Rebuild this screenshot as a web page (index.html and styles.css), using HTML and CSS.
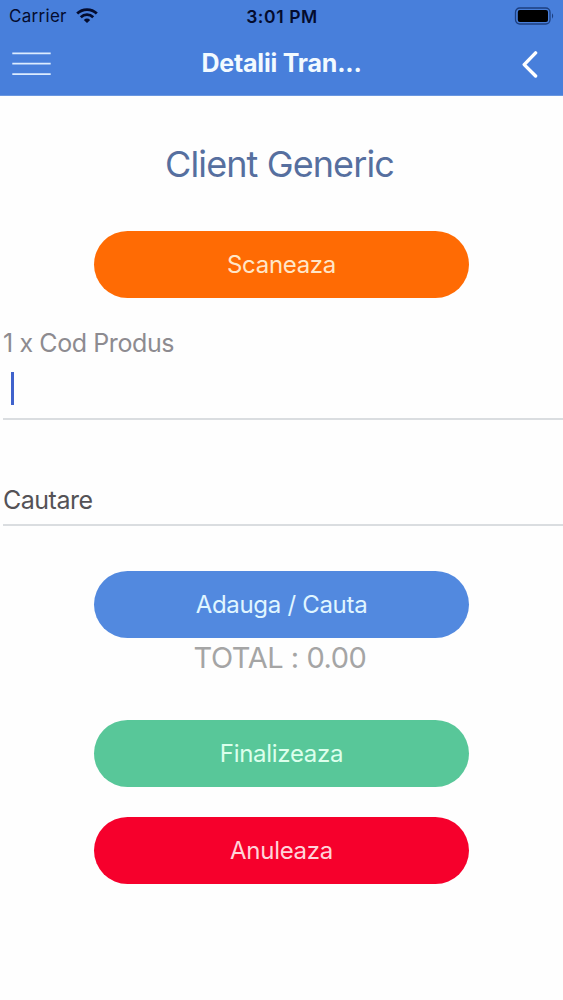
FILE: index.html
```
<!DOCTYPE html>
<html lang="ro">
<head>
    <meta charset="UTF-8">
    <meta name="viewport" content="width=device-width, initial-scale=1.0">
    <link rel="stylesheet" href="styles.css">
    <title>Detalii Tranzactie</title>
</head>
<body>
    <header class="header">
        <div class="status">
            <div class="carrier">
                <span>Carrier</span>
                <svg class="wifi" width="22" height="16" viewBox="0 0 22 16">
                    <g fill="none" stroke="#040c2e" stroke-width="2.8">
                        <path d="M1.2 5.6 A14 14 0 0 1 20.8 5.6"/>
                        <path d="M4.8 9.2 A9 9 0 0 1 17.2 9.2"/>
                    </g>
                    <path d="M7.8 11.9 A5 5 0 0 1 14.2 11.9 L11 15.1 Z" fill="#040c2e"/>
                </svg>
            </div>
            <div class="time">3:01 PM</div>
            <svg class="battery" width="41" height="18" viewBox="0 0 41 18">
                <rect x="1.5" y="1" width="34.5" height="16" rx="4.2" fill="none" stroke="#1d3f80" stroke-width="1.3"/>
                <rect x="3.8" y="3" width="30.2" height="12" rx="2" fill="#000"/>
                <path d="M38 6.3 Q40.4 9 38 11.7 Z" fill="#1d3f80"/>
            </svg>
        </div>
        <div class="nav">
            <svg class="menu" width="40" height="26" viewBox="0 0 40 26">
                <path d="M0.3 2.3 H38.7 M0.3 12.6 H38.7 M0.3 23.1 H38.7" stroke="#dcecff" stroke-width="1.8"/>
            </svg>
            <h1>Detalii Tran...</h1>
            <svg class="back" width="18" height="28" viewBox="0 0 18 28">
                <path d="M14.6 2.9 L3.2 14.6 L14.6 26" fill="none" stroke="#fff" stroke-width="3.4" stroke-linecap="round" stroke-linejoin="round"/>
            </svg>
        </div>
    </header>

    <main>
        <h2>Client Generic</h2>
        <button class="btn scan">Scaneaza</button>

        <div class="field product">
            <label>1 x Cod Produs</label>
            <div class="cursor"></div>
        </div>
        <div class="field search">
            <label>Cautare</label>
        </div>

        <button class="btn add">Adauga / Cauta</button>
        <div class="total">TOTAL : 0.00</div>
        <button class="btn finish">Finalizeaza</button>
        <button class="btn cancel">Anuleaza</button>
    </main>
</body>
</html>
```
FILE: styles.css
```
* {
    margin: 0;
    padding: 0;
    box-sizing: border-box;
}
body {
    height: 1000px;
    background-color: #fefefe;
    font-family: Inter, "Liberation Sans", sans-serif;
    overflow: hidden;
}
.header {
    height: 96px;
    background-color: #487fdb;
    border-bottom: 1px solid #6a97e0;
}
.status {
    display: grid;
    grid-template-columns: 1fr auto 1fr;
    align-items: center;
    height: 32px;
    padding: 0 8px 0 9px;
    color: #040c2e;
    font-size: 17px;
    letter-spacing: 0.3px;
}
.carrier {
    display: flex;
    align-items: center;
    gap: 9px;
}
.time {
    font-size: 17.5px;
    font-weight: 600;
    letter-spacing: 0.6px;
}
.battery {
    justify-self: end;
}
.nav {
    display: grid;
    grid-template-columns: 1fr auto 1fr;
    align-items: center;
    height: 64px;
    padding: 0 24px 0 12px;
}
.nav h1 {
    margin: -3px -12px 0 0;
    font-size: 25px;
    font-weight: 700;
    letter-spacing: -0.2px;
    color: #f2faff;
}
.back {
    justify-self: end;
}
main {
    display: flex;
    flex-direction: column;
    align-items: center;
}
h2 {
    margin-top: 43px;
    padding-right: 4px;
    height: 50px;
    line-height: 50px;
    font-size: 36px;
    font-weight: 400;
    letter-spacing: -0.9px;
    color: #566f9f;
}
.btn {
    width: 375px;
    height: 67px;
    border: 0;
    border-radius: 34px;
    font-family: inherit;
    font-size: 24px;
    font-weight: 400;
    letter-spacing: -0.3px;
}
.scan {
    margin-top: 42px;
    background-color: #ff6b04;
    color: #ffe6c8;
}
.field {
    width: 560px;
    align-self: flex-end;
    border-bottom: 2px solid #dadde0;
    font-size: 25px;
    line-height: 32px;
    letter-spacing: -0.4px;
}
.product {
    margin-top: 29px;
    height: 93px;
    color: #8d8b90;
}
.cursor {
    width: 3px;
    height: 33px;
    margin: 13px 0 0 8px;
    background-color: #3f62cc;
}
.search {
    margin-top: 64px;
    height: 42px;
    color: #545256;
    letter-spacing: -0.5px;
}
.add {
    margin-top: 45px;
    background-color: #5289df;
    color: #e0f6ff;
}
.total {
    padding-right: 3px;
    height: 40px;
    line-height: 40px;
    font-size: 29px;
    letter-spacing: -0.45px;
    color: #a5a5a5;
}
.finish {
    margin-top: 42px;
    background-color: #58c799;
    color: #dcffec;
}
.cancel {
    margin-top: 30px;
    background-color: #f6002c;
    color: #ffd3da;
}
```
